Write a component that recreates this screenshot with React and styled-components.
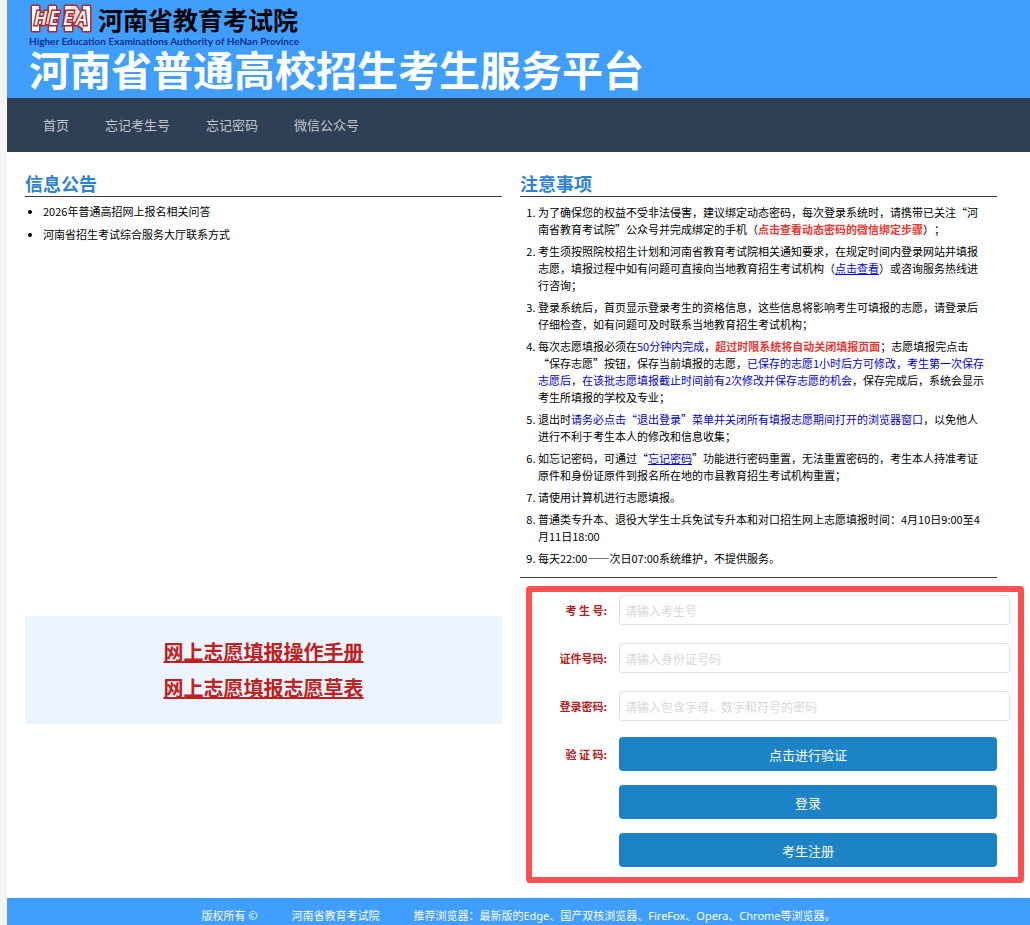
import React from "react";
import styled, { createGlobalStyle } from "styled-components";

const GlobalStyle = createGlobalStyle`
  * {
    box-sizing: border-box;
  }

  body {
    margin: 0;
    background: #f5f5f5;
    color: #000;
    font-family: "Noto Sans CJK SC", "Noto Sans", sans-serif;
    font-size: 11px;
    line-height: 17px;
    text-spacing-trim: space-all;
  }

  button,
  input {
    font-family: inherit;
  }
`;

const Page = styled.div`
  margin-left: 7px;
  background: #fff;
`;

const Header = styled.header`
  height: 98px;
  padding: 4px 22px 0;
  background: #409eff;
`;

const Brand = styled.div`
  display: flex;
  align-items: center;
  gap: 5px;
  height: 30px;
`;

const BrandName = styled.span`
  font-size: 25px;
  font-weight: 700;
  line-height: 30px;
`;

const BrandEnglish = styled.div`
  color: #0a2f8f;
  font-family: Lato, "Noto Sans", sans-serif;
  font-size: 10px;
  font-weight: 700;
  line-height: 14px;
`;

const Title = styled.h1`
  margin: 0;
  color: #fff;
  font-size: 41px;
  font-weight: 700;
  line-height: 40px;
  white-space: nowrap;
`;

const Nav = styled.nav`
  display: flex;
  padding: 0 18px;
  background: #2f4056;
`;

const NavItem = styled.a`
  padding: 0 18px;
  color: #c1c6cd;
  font-size: 13px;
  line-height: 54px;
  text-decoration: none;

  &:hover {
    color: #fff;
  }
`;

const Content = styled.main`
  display: grid;
  grid-template-columns: 1fr 1fr;
  gap: 18px;
  padding: 18px 33px 15px 18px;
`;

const Heading = styled.h2`
  margin: 0;
  border-bottom: 1px solid #393d49;
  color: #2e82d6;
  font-size: 18px;
  font-weight: 700;
  line-height: 26px;
`;

const NewsList = styled.ul`
  min-height: 419px;
  margin: 0;
  padding: 6px 0 0 18px;

  li {
    margin-bottom: 6px;
  }

  a {
    color: #000;
    text-decoration: none;
  }
`;

const Rules = styled.ol`
  margin: 0;
  padding: 7px 11px 5px 18px;
  border-bottom: 1px solid #393d49;

  li {
    margin-bottom: 5px;
  }
`;

const Blue = styled.span`
  color: #0000cd;
`;

const Warning = styled.strong`
  color: #e53935;
`;

const InlineLink = styled.a`
  color: ${(props) => (props.$warning ? "#e53935" : "#0000ee")};
  font-weight: ${(props) => (props.$warning ? 700 : 400)};
  text-decoration: ${(props) => (props.$warning ? "none" : "underline")};
`;

const Downloads = styled.div`
  display: flex;
  flex-direction: column;
  align-items: center;
  padding: 18px;
  background: #eaf5ff;
`;

const DownloadLink = styled.a`
  color: #c02020;
  font-size: 20px;
  font-weight: 700;
  line-height: 36px;
`;

/* wider than its column, so the frame stands out to the right */
const LoginForm = styled.form`
  display: flex;
  flex-direction: column;
  gap: 14px;
  margin: 8px -27px 0 6px;
  padding: 1px 8px 10px 0;
  border: 6px solid #fa5252;
  border-radius: 4px;
`;

const Row = styled.div`
  display: grid;
  grid-template-columns: 75px 1fr;
  align-items: center;
  gap: 12px;
  height: 34px;
  padding-right: ${(props) => (props.$button ? "13px" : "0")};
`;

const Label = styled.label`
  color: #b22222;
  font-weight: 700;
  text-align: right;
  white-space: pre;
`;

const Input = styled.input`
  width: 100%;
  height: 30px;
  padding: 0 5px;
  border: 1px solid #e2e2e2;
  border-radius: 3px;
  background: #fff;
  font-size: 12px;
  outline: none;

  &::placeholder {
    color: #d8d8d8;
  }
`;

const Button = styled.button`
  grid-column: 2;
  height: 34px;
  border: none;
  border-radius: 4px;
  background: #1c84c6;
  color: #fff;
  font-size: 13px;
  cursor: pointer;
`;

const Footer = styled.footer`
  display: flex;
  justify-content: center;
  gap: 34px;
  padding: 9px 0 1px;
  background: #409eff;
  color: #fff;
  font-family: "Noto Sans", "Noto Sans CJK SC", sans-serif;
`;

const navItems = ["首页", "忘记考生号", "忘记密码", "微信公众号"];

const news = [
  "2026年普通高招网上报名相关问答",
  "河南省招生考试综合服务大厅联系方式",
];

const fields = [
  { id: "ksh", label: "考 生 号:", placeholder: "请输入考生号", type: "text" },
  { id: "zjhm", label: "证件号码:", placeholder: "请输入身份证号码", type: "text" },
  {
    id: "dlmm",
    label: "登录密码:",
    placeholder: "请输入包含字母、数字和符号的密码",
    type: "password",
  },
];

const Logo = () => (
  <svg width="64" height="30" viewBox="0 0 64 30" role="img" aria-label="HEEA">
    <g stroke="#b3262e" strokeWidth="3" strokeLinejoin="round">
      <rect x="3" y="2" width="7" height="25" />
      <rect x="20" y="2" width="7" height="25" />
      <rect x="36" y="2" width="7" height="25" />
      <rect x="54" y="2" width="7" height="25" />
      <path d="M10 9h10v11H10zM43 2h4l7 11v12L43 16z" />
    </g>
    <g fill="#fff">
      <rect x="3" y="2" width="7" height="25" />
      <rect x="20" y="2" width="7" height="25" />
      <rect x="36" y="2" width="7" height="25" />
      <rect x="54" y="2" width="7" height="25" />
      <path fill="#f6dcdc" d="M9 9h12v11H9zM42 2h5l8 11v12L42 16z" />
    </g>
    <text
      x="5 20 34 47"
      y="21"
      fill="#fff"
      stroke="#b3262e"
      strokeWidth="3"
      paintOrder="stroke"
      fontFamily="Open Sans, sans-serif"
      fontSize="19"
      fontStyle="italic"
      fontWeight="600"
    >
      HEEA
    </text>
  </svg>
);

const App = () => {
  return (
    <Page lang="zh-CN">
      <GlobalStyle />
      <Header>
        <Brand>
          <Logo />
          <BrandName>河南省教育考试院</BrandName>
        </Brand>
        <BrandEnglish>
          Higher Education Examinations Authority of HeNan Province
        </BrandEnglish>
        <Title>河南省普通高校招生考生服务平台</Title>
      </Header>

      <Nav>
        {navItems.map((item) => (
          <NavItem key={item} href="#">
            {item}
          </NavItem>
        ))}
      </Nav>

      <Content>
        <section>
          <Heading>信息公告</Heading>
          <NewsList>
            {news.map((item) => (
              <li key={item}>
                <a href="#">{item}</a>
              </li>
            ))}
          </NewsList>
          <Downloads>
            <DownloadLink href="#">网上志愿填报操作手册</DownloadLink>
            <DownloadLink href="#">网上志愿填报志愿草表</DownloadLink>
          </Downloads>
        </section>

        <section>
          <Heading>注意事项</Heading>
          <Rules>
            <li>
              为了确保您的权益不受非法侵害，建议绑定动态密码，每次登录系统时，请携带已关注“河南省教育考试院”公众号并完成绑定的手机（
              <InlineLink $warning href="#">
                点击查看动态密码的微信绑定步骤
              </InlineLink>
              ）；
            </li>
            <li>
              考生须按照院校招生计划和河南省教育考试院相关通知要求，在规定时间内登录网站并填报志愿，填报过程中如有问题可直接向当地教育招生考试机构（
              <InlineLink href="#">点击查看</InlineLink>
              ）或咨询服务热线进行咨询；
            </li>
            <li>
              登录系统后，首页显示登录考生的资格信息，这些信息将影响考生可填报的志愿，请登录后仔细检查，如有问题可及时联系当地教育招生考试机构；
            </li>
            <li>
              每次志愿填报必须在<Blue>50分钟内完成</Blue>，
              <Warning>超过时限系统将自动关闭填报页面</Warning>
              ；志愿填报完点击“保存志愿”按钮，保存当前填报的志愿，
              <Blue>
                已保存的志愿1小时后方可修改，考生第一次保存志愿后，在该批志愿填报截止时间前有2次修改并保存志愿的机会
              </Blue>
              ，保存完成后，系统会显示考生所填报的学校及专业；
            </li>
            <li>
              退出时
              <Blue>
                请务必点击“退出登录”菜单并关闭所有填报志愿期间打开的浏览器窗口
              </Blue>
              ，以免他人进行不利于考生本人的修改和信息收集；
            </li>
            <li>
              如忘记密码，可通过“<InlineLink href="#">忘记密码</InlineLink>
              ”功能进行密码重置，无法重置密码的，考生本人持准考证原件和身份证原件到报名所在地的市县教育招生考试机构重置；
            </li>
            <li>请使用计算机进行志愿填报。</li>
            <li>
              普通类专升本、退役大学生士兵免试专升本和对口招生网上志愿填报时间：4月10日9:00至4月11日18:00
            </li>
            <li>每天22:00——次日07:00系统维护，不提供服务。</li>
          </Rules>

          <LoginForm onSubmit={(e) => e.preventDefault()}>
            {fields.map((field) => (
              <Row key={field.id}>
                <Label htmlFor={field.id}>{field.label}</Label>
                <Input
                  id={field.id}
                  type={field.type}
                  placeholder={field.placeholder}
                />
              </Row>
            ))}
            <Row $button>
              <Label htmlFor="verify">验 证 码:</Label>
              <Button id="verify" type="button">
                点击进行验证
              </Button>
            </Row>
            <Row $button>
              <Button type="submit">登录</Button>
            </Row>
            <Row $button>
              <Button type="button">考生注册</Button>
            </Row>
          </LoginForm>
        </section>
      </Content>

      <Footer>
        <span>版权所有 ©</span>
        <span>河南省教育考试院</span>
        <span>推荐浏览器：最新版的Edge、国产双核浏览器、FireFox、Opera、Chrome等浏览器。</span>
      </Footer>
    </Page>
  );
};

export default App;
